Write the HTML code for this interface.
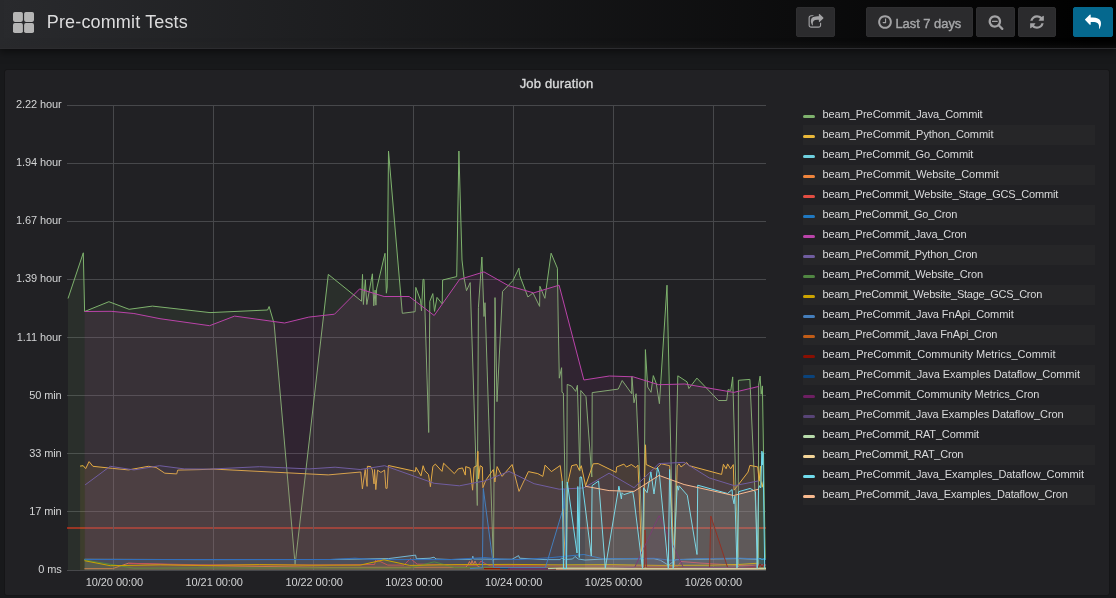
<!DOCTYPE html>
<html lang="en"><head><meta charset="utf-8"><title>Pre-commit Tests - Grafana</title>
<style>
*{box-sizing:border-box;margin:0;padding:0}
html,body{width:1116px;height:598px;overflow:hidden;background:#18191b;font-family:"Liberation Sans",Arial,sans-serif;color:#d8d9da}
.layer{position:absolute;left:0;top:0;width:1116px;height:598px;will-change:transform}
.navbar{position:absolute;left:0;top:0;width:1116px;height:49px;background:linear-gradient(90deg,#292a2d,#000);border-bottom:1px solid #2c2c2f;box-shadow:inset 0 -6px 8px -6px rgba(40,40,42,.55),0 2px 8px 1px rgba(0,0,0,.5)}
.navicon{position:absolute;left:13px;top:12px;width:21px;height:21px}
.navtitle{position:absolute;left:46.8px;top:10px;font-size:18px;line-height:24px;color:#dcdcdd;white-space:nowrap;letter-spacing:.15px}
.btn{position:absolute;top:7px;height:30px;background:#2b2b2d;border-radius:2px;color:#b9b9ba;font-size:13px;line-height:30px;white-space:nowrap;border:1px solid #2f2f31}
.btn svg{position:absolute}
.btn.primary{background:#05688e;border-color:#05688e}
.panel{position:absolute;left:4px;top:69px;width:1106px;height:527px;background:#212124;border:1px solid #151517;border-radius:3px}
.ptitle{position:absolute;left:0;top:76px;width:1113px;text-align:center;font-size:13px;-webkit-text-stroke:.35px #d8d9da;letter-spacing:.17px;line-height:16px;color:#d8d9da}
.chart{position:absolute;left:0;top:0}
.yl{position:absolute;left:0;width:61.6px;letter-spacing:-.1px;text-align:right;font-size:11px;line-height:12px;color:#d3d4d5;white-space:nowrap}
.xl{position:absolute;top:576px;letter-spacing:-.07px;width:80px;margin-left:-40px;text-align:center;font-size:11px;line-height:12px;color:#d3d4d5;white-space:nowrap}
.lg{position:absolute;left:803px;width:292px;height:20px;font-size:11px;letter-spacing:-.08px;line-height:20px;color:#d8d9da;white-space:nowrap}
.lg.alt{background:#262628}
.lg i{position:absolute;left:0.3px;top:10px;width:12px;height:3px;border-radius:1.5px}
.lg span{position:absolute;left:19.5px;top:-1.4px}
</style></head><body>

<div class="layer">
<div class="navbar">
<svg class="navicon" viewBox="0 0 21 21"><g fill="#b5b5b5"><rect x="0" y="0" width="9.9" height="9.9" rx="1.8"/><rect x="11.1" y="0" width="9.9" height="9.9" rx="1.8"/><rect x="0" y="11.1" width="9.9" height="9.9" rx="1.8"/><rect x="11.1" y="11.1" width="9.9" height="9.9" rx="1.8"/></g></svg>
<div class="navtitle">Pre-commit Tests</div>
<div class="btn" style="left:796px;width:39px"><svg style="left:10.5px;top:5.5px" width="16.00" height="16" viewBox="0 0 1792 1792"><path fill="#a3a3a5" d="M1472 989v259q0 119-84.500 203.500t-203.500 84.500h-832q-119 0-203.500-84.500t-84.500-203.500v-832q0-119 84.500-203.500t203.500-84.500h255q13 0 22.500 9.500t9.500 22.500q0 27-26 32-77 26-133 60-10 4-16 4h-112q-66 0-113 47t-47 113v832q0 66 47 113t113 47h832q66 0 113-47t47-113v-214q0-19 18-29 28-13 54-37 16-16 35-8 21 9 21 29zm237-496l-384 384q-18 19-45 19-12 0-25-5-39-17-39-59v-192h-160q-323 0-438 131-119 137-74 473 3 23-20 34-8 2-12 2-16 0-26-13-10-14-21-31t-39.500-68.500-49.500-99.500-38.500-114-17.500-122q0-49 3.500-91t14-90 28-88 47-81.500 68.500-74 94.500-61.500 124.500-48.500 159.500-30.500 196.500-11h160v-192q0-42 39-59 13-5 25-5 26 0 45 19l384 384q19 19 19 45t-19 45z"/></svg></div>
<div class="btn" style="left:866px;width:107px"><svg style="left:10.1px;top:6px" width="16.00" height="16" viewBox="0 0 1792 1792"><path fill="#a3a3a5" d="M1024 544v448q0 14-9 23t-23 9h-320q-14 0-23-9t-9-23v-64q0-14 9-23t23-9h224v-352q0-14 9-23t23-9h64q14 0 23 9t9 23zm416 352q0-148-73-273t-198-198-273-73-273 73-198 198-73 273 73 273 198 198 273 73 273-73 198-198 73-273zm224 0q0 209-103 385.500t-279.500 279.500-385.500 103-385.500-103-279.500-279.500-103-385.500 103-385.500 279.500-279.500 385.500-103 385.500 103 279.500 279.500 103 385.500z"/></svg><span style="position:absolute;left:28.4px;top:1px;font-size:12.9px;-webkit-text-stroke:.4px #a6a7a9;color:#a6a7a9">Last 7 days</span></div>
<div class="btn" style="left:976px;width:39px"><svg style="left:10.6px;top:6px" width="16.00" height="16" viewBox="0 0 1792 1792"><path fill="#a3a3a5" d="M1088 800v64q0 13-9.500 22.500t-22.500 9.500h-576q-13 0-22.500-9.500t-9.500-22.500v-64q0-13 9.500-22.500t22.500-9.500h576q13 0 22.500 9.500t9.500 22.500zm128 32q0-185-131.500-316.500t-316.500-131.500-316.500 131.500-131.500 316.500 131.500 316.500 316.500 131.500 316.500-131.500 131.500-316.500zm512 832q0 53-37.500 90.500t-90.500 37.500q-54 0-90-38l-343-342q-179 124-399 124-143 0-273.500-55.500t-225-150-150-225-55.500-273.500 55.500-273.500 150-225 225-150 273.500-55.500 273.500 55.500 225 150 150 225 55.500 273.500q0 220-124 399l343 343q37 37 37 90z"/></svg></div>
<div class="btn" style="left:1018px;width:38px"><svg style="left:9.8px;top:5.7px" width="16.00" height="16" viewBox="0 0 1792 1792"><path fill="#a3a3a5" d="M1639 1056q0 5-1 7-64 268-268 434.500t-478 166.500q-146 0-282.500-55t-243.500-157l-129 129q-19 19-45 19t-45-19-19-45v-448q0-26 19-45t45-19h448q26 0 45 19t19 45-19 45l-137 137q71 66 161 102t187 36q134 0 250-65t186-179q11-17 53-117 8-23 30-23h192q13 0 22.500 9.500t9.500 22.500zm25-800v448q0 26-19 45t-45 19h-448q-26 0-45-19t-19-45 19-45l138-138q-148-137-349-137-134 0-250 65t-186 179q-11 17-53 117-8 23-30 23h-199q-13 0-22.500-9.500t-9.500-22.500v-7q65-268 270-434.500t480-166.500q146 0 284 55.500t245 156.500l130-129q19-19 45-19t45 19 19 45z"/></svg></div>
<div class="btn primary" style="left:1073px;width:40px"><svg style="left:11.2px;top:5.9px" width="16.00" height="16" viewBox="0 0 1792 1792"><path fill="#ffffff" d="M1792 1120q0 166-127 451-3 7-10.500 24t-13.500 30-13 22q-12 17-28 17-15 0-23.500-10t-8.500-25q0-9 2.500-26.500t2.500-23.500q5-68 5-123 0-101-17.500-181t-48.500-138.500-80-101-105.500-69.500-133-42.500-154-21.500-175.500-6h-224v256q0 26-19 45t-45 19-45-19l-512-512q-19-19-19-45t19-45l512-512q19-19 45-19t45 19 19 45v256h224q713 0 875 403 53 134 53 333z"/></svg></div>
</div>
<div class="panel"></div>
<div class="ptitle">Job duration</div>
<svg class="chart" width="1116" height="598" viewBox="0 0 1116 598">
<path d="M67 528 H766" stroke="rgba(237,46,24,0.6)" stroke-width="2" fill="none"/>
<path d="M67 105.5 H766 M67 163.5 H766 M67 221.5 H766 M67 279.5 H766 M67 337.5 H766 M67 395.5 H766 M67 453.5 H766 M67 511.5 H766 M67 570.5 H766 M113.5 105 V571 M213.5 105 V571 M313.5 105 V571 M413.5 105 V571 M513.5 105 V571 M613.5 105 V571 M713.5 105 V571" stroke="#47484b" stroke-width="1" fill="none" shape-rendering="crispEdges"/>
<path d="M68 298.5 L83.3 252.8 L84.6 311.5 L108.9 301.7 L129.1 309.3 L152.4 306.1 L210 312.6 L267.6 310 L269.1 306.5 L274.1 323.5 L295.1 564.5 L328.3 274.4 L361.5 301.2 L362.5 274.4 L363.4 304.5 L365.3 279.8 L366.8 304.5 L372.4 273.8 L373.8 305.8 L375.1 290.1 L375.9 305.2 L376.6 289 L385 253.3 L386.4 293.2 L387.2 287 L388.5 151 L402.3 313.3 L415.1 311.7 L415.8 287.4 L420.5 300.2 L421.5 310.8 L423 279.4 L424 279.4 L428.7 432.5 L429.8 301.4 L432.8 293.6 L434.5 311.4 L437 297.4 L442.2 303.9 L442.6 280 L456.7 276.6 L458.9 151 L462 260 L464 277.6 L466.5 290.7 L470.2 282.6 L477.3 505.5 L478.4 307.7 L481.9 257 L484 316.5 L485 302.7 L493.5 566 L495 297.6 L497 401.7 L502.5 291.4 L512.9 280.7 L518.9 268.2 L519.8 275.7 L527.9 297 L533 292.9 L539.6 306.4 L539.9 286.3 L544.9 298.3 L551.1 253.2 L557.4 268.2 L558.2 320 L559.3 378.2 L561.6 367.7 L562 392.3 L563.4 393.2 L566.5 568 L567.2 384.4 L571.6 386.1 L575.7 391.4 L577.4 385.3 L579.8 471.1 L580.8 390.5 L586 396.7 L591.8 477 L592.2 392.6 L618.2 389.1 L622.2 380.5 L631.7 393.7 L631.9 376.5 L634 402.8 L636.1 393.7 L643.6 568 L645.4 349.6 L647.7 387 L651 392.3 L653.3 375.6 L656.3 383.5 L659.4 403.7 L667 285.2 L673.5 568 L677.8 375.8 L687.1 381.9 L688.9 388.5 L696.9 378.1 L718.4 400.5 L726.7 400.5 L728 389.7 L730.8 390.4 L732.7 376.9 L738.2 568 L738.4 380.3 L749.9 379.4 L758.4 568 L758.6 385.2 L760.1 376.1 L761.2 394.2 L762.4 385.9 L765.3 560 L765.3 570 L68 570 Z" fill="#7EB26D" fill-opacity="0.1" stroke="none"/>
<path d="M68 298.5 L83.3 252.8 L84.6 311.5 L108.9 301.7 L129.1 309.3 L152.4 306.1 L210 312.6 L267.6 310 L269.1 306.5 L274.1 323.5 L295.1 564.5 L328.3 274.4 L361.5 301.2 L362.5 274.4 L363.4 304.5 L365.3 279.8 L366.8 304.5 L372.4 273.8 L373.8 305.8 L375.1 290.1 L375.9 305.2 L376.6 289 L385 253.3 L386.4 293.2 L387.2 287 L388.5 151 L402.3 313.3 L415.1 311.7 L415.8 287.4 L420.5 300.2 L421.5 310.8 L423 279.4 L424 279.4 L428.7 432.5 L429.8 301.4 L432.8 293.6 L434.5 311.4 L437 297.4 L442.2 303.9 L442.6 280 L456.7 276.6 L458.9 151 L462 260 L464 277.6 L466.5 290.7 L470.2 282.6 L477.3 505.5 L478.4 307.7 L481.9 257 L484 316.5 L485 302.7 L493.5 566 L495 297.6 L497 401.7 L502.5 291.4 L512.9 280.7 L518.9 268.2 L519.8 275.7 L527.9 297 L533 292.9 L539.6 306.4 L539.9 286.3 L544.9 298.3 L551.1 253.2 L557.4 268.2 L558.2 320 L559.3 378.2 L561.6 367.7 L562 392.3 L563.4 393.2 L566.5 568 L567.2 384.4 L571.6 386.1 L575.7 391.4 L577.4 385.3 L579.8 471.1 L580.8 390.5 L586 396.7 L591.8 477 L592.2 392.6 L618.2 389.1 L622.2 380.5 L631.7 393.7 L631.9 376.5 L634 402.8 L636.1 393.7 L643.6 568 L645.4 349.6 L647.7 387 L651 392.3 L653.3 375.6 L656.3 383.5 L659.4 403.7 L667 285.2 L673.5 568 L677.8 375.8 L687.1 381.9 L688.9 388.5 L696.9 378.1 L718.4 400.5 L726.7 400.5 L728 389.7 L730.8 390.4 L732.7 376.9 L738.2 568 L738.4 380.3 L749.9 379.4 L758.4 568 L758.6 385.2 L760.1 376.1 L761.2 394.2 L762.4 385.9 L765.3 560" fill="none" stroke="#7EB26D" stroke-width="1" stroke-linejoin="round"/>
<path d="M80.1 466.1 L83.2 465.7 L85.7 468.6 L89.1 461.6 L92.9 466.3 L112.7 468.4 L128.4 469.9 L148.5 466.3 L156 467.4 L164.8 473.2 L176.7 473.9 L177.7 470.1 L200 469.6 L213.8 469.1 L328.2 474.9 L360.8 472 L362.4 488.9 L365.2 469.5 L367.1 486.4 L367.4 466.3 L370.8 466.6 L372.4 470.1 L374 483.9 L374.6 469.5 L375.8 489.6 L377.5 470.1 L380.9 472.4 L384.6 470.1 L385.9 488.3 L387.1 488.3 L388.4 465.5 L415.4 471.4 L416 467.4 L421 475.8 L423.1 465.7 L424.8 470.7 L428.5 474.5 L430.4 486.7 L432.9 466.3 L435.4 464.1 L442 471.4 L443.6 463.2 L454.3 473.6 L458.2 468.9 L462.5 467.9 L465.3 475.1 L465.7 466.6 L470.1 468.2 L472.6 490.2 L474.1 467 L477 465.7 L477.9 451.3 L478.6 478.9 L480.1 465.7 L482.4 467 L482.9 487.7 L485.8 480.2 L493.3 469.5 L494.9 482 L497.1 466.6 L502.1 476.4 L512.1 464.5 L519 491.4 L528.4 471.6 L537.8 473.6 L542.8 476.4 L545.1 465.1 L551.4 471.6 L560.2 465.5 L562.3 481.4 L565.4 568 L567.3 485.2 L571.7 465.7 L576.7 464.5 L579.2 470.1 L581.3 465.7 L585.6 485.8 L593.2 463.8 L598.2 463.6 L616.1 472.4 L616.6 467 L623.9 464.1 L626.4 467 L631.4 464.5 L635.8 467.6 L638 465.1 L642.2 568 L645.5 444.8 L646.2 464.5 L655.9 469.1 L661.3 463.8 L669.7 465.7 L674.2 568 L677.2 465.7 L679.1 463.8 L681 467 L686.7 462.6 L689.2 465.7 L721.6 474.4 L723.4 464.3 L726.1 468.8 L727.6 463.9 L730.6 468.8 L733.3 464.6 L734.1 490.2 L748 472.1 L749.9 465.4 L757.7 466.9 L759.2 481.2 L760.4 466.1 L761 481 L762.2 487.2 L763.4 481.2 L763.4 570 L80.1 570 Z" fill="#EAB839" fill-opacity="0.1" stroke="none"/>
<path d="M80.1 466.1 L83.2 465.7 L85.7 468.6 L89.1 461.6 L92.9 466.3 L112.7 468.4 L128.4 469.9 L148.5 466.3 L156 467.4 L164.8 473.2 L176.7 473.9 L177.7 470.1 L200 469.6 L213.8 469.1 L328.2 474.9 L360.8 472 L362.4 488.9 L365.2 469.5 L367.1 486.4 L367.4 466.3 L370.8 466.6 L372.4 470.1 L374 483.9 L374.6 469.5 L375.8 489.6 L377.5 470.1 L380.9 472.4 L384.6 470.1 L385.9 488.3 L387.1 488.3 L388.4 465.5 L415.4 471.4 L416 467.4 L421 475.8 L423.1 465.7 L424.8 470.7 L428.5 474.5 L430.4 486.7 L432.9 466.3 L435.4 464.1 L442 471.4 L443.6 463.2 L454.3 473.6 L458.2 468.9 L462.5 467.9 L465.3 475.1 L465.7 466.6 L470.1 468.2 L472.6 490.2 L474.1 467 L477 465.7 L477.9 451.3 L478.6 478.9 L480.1 465.7 L482.4 467 L482.9 487.7 L485.8 480.2 L493.3 469.5 L494.9 482 L497.1 466.6 L502.1 476.4 L512.1 464.5 L519 491.4 L528.4 471.6 L537.8 473.6 L542.8 476.4 L545.1 465.1 L551.4 471.6 L560.2 465.5 L562.3 481.4 L565.4 568 L567.3 485.2 L571.7 465.7 L576.7 464.5 L579.2 470.1 L581.3 465.7 L585.6 485.8 L593.2 463.8 L598.2 463.6 L616.1 472.4 L616.6 467 L623.9 464.1 L626.4 467 L631.4 464.5 L635.8 467.6 L638 465.1 L642.2 568 L645.5 444.8 L646.2 464.5 L655.9 469.1 L661.3 463.8 L669.7 465.7 L674.2 568 L677.2 465.7 L679.1 463.8 L681 467 L686.7 462.6 L689.2 465.7 L721.6 474.4 L723.4 464.3 L726.1 468.8 L727.6 463.9 L730.6 468.8 L733.3 464.6 L734.1 490.2 L748 472.1 L749.9 465.4 L757.7 466.9 L759.2 481.2 L760.4 466.1 L761 481 L762.2 487.2 L763.4 481.2" fill="none" stroke="#EAB839" stroke-width="1" stroke-linejoin="round"/>
<path d="M84.5 559.3 L200 559.6 L330 559.5 L388.4 558.6 L415.6 555.1 L416.4 558.8 L430 558.2 L434 557.2 L436 559 L450 559.5 L470 559.3 L472.2 559 L472.8 556.2 L473.6 559 L495 559.2 L512 559.3 L518.6 555.6 L519.6 558.2 L545 559.6 L560 559.6 L561.9 557.9 L563.8 559.6 L572.6 559 L575 556.4 L578.2 559 L585 560 L604 559 L654 558.7 L660.3 560.2 L668.5 565.2 L676 559.5 L700 559.2 L740 558.6 L757 559.3 L760 558.3 L762 559.6 L765 558.5 L765 570 L84.5 570 Z" fill="#6ED0E0" fill-opacity="0.1" stroke="none"/>
<path d="M84.5 559.3 L200 559.6 L330 559.5 L388.4 558.6 L415.6 555.1 L416.4 558.8 L430 558.2 L434 557.2 L436 559 L450 559.5 L470 559.3 L472.2 559 L472.8 556.2 L473.6 559 L495 559.2 L512 559.3 L518.6 555.6 L519.6 558.2 L545 559.6 L560 559.6 L561.9 557.9 L563.8 559.6 L572.6 559 L575 556.4 L578.2 559 L585 560 L604 559 L654 558.7 L660.3 560.2 L668.5 565.2 L676 559.5 L700 559.2 L740 558.6 L757 559.3 L760 558.3 L762 559.6 L765 558.5" fill="none" stroke="#6ED0E0" stroke-width="1" stroke-linejoin="round"/>
<path d="M84.5 568.6 L112.7 568.6 L128.4 563.2 L200 565.6 L330 567.4 L466 567.2 L467.6 565 L469.5 561.5 L470.8 564.5 L472 560.5 L473.5 564.5 L475 561 L477 565.5 L480 567.4 L560 567.6 L640 567.6 L766 567.4 L766 570 L84.5 570 Z" fill="#EF843C" fill-opacity="0.1" stroke="none"/>
<path d="M84.5 568.6 L112.7 568.6 L128.4 563.2 L200 565.6 L330 567.4 L466 567.2 L467.6 565 L469.5 561.5 L470.8 564.5 L472 560.5 L473.5 564.5 L475 561 L477 565.5 L480 567.4 L560 567.6 L640 567.6 L766 567.4" fill="none" stroke="#EF843C" stroke-width="1" stroke-linejoin="round"/>
<path d="M128.4 563.4 L200 564.8 L320 564.9 L374.6 564.5 L375.8 559.5 L387.8 565.1 L404 565.1 L410.3 558.6 L417.2 564.1 L470 565 L478 565 L481 561 L486 564 L490 565.8 L560 566 L678 566 L681 561.5 L700 563 L740 565.5 L766 565 L766 570 L128.4 570 Z" fill="#E24D42" fill-opacity="0.1" stroke="none"/>
<path d="M128.4 563.4 L200 564.8 L320 564.9 L374.6 564.5 L375.8 559.5 L387.8 565.1 L404 565.1 L410.3 558.6 L417.2 564.1 L470 565 L478 565 L481 561 L486 564 L490 565.8 L560 566 L678 566 L681 561.5 L700 563 L740 565.5 L766 565" fill="none" stroke="#E24D42" stroke-width="1" stroke-linejoin="round"/>
<path d="M84.5 559.5 L200 559.5 L330 559.5 L355 558.2 L372 559.5 L450 559.6 L470 558.4 L485 557.6 L500 559 L520 559.6 L550 557.7 L583.9 554.5 L602.7 558.7 L654 558.3 L670 560.2 L700 558.6 L740 558.2 L766 559.2 L766 570 L84.5 570 Z" fill="#1F78C1" fill-opacity="0.1" stroke="none"/>
<path d="M84.5 559.5 L200 559.5 L330 559.5 L355 558.2 L372 559.5 L450 559.6 L470 558.4 L485 557.6 L500 559 L520 559.6 L550 557.7 L583.9 554.5 L602.7 558.7 L654 558.3 L670 560.2 L700 558.6 L740 558.2 L766 559.2" fill="none" stroke="#1F78C1" stroke-width="1" stroke-linejoin="round"/>
<path d="M84.6 311.5 L111.1 311.3 L133.9 313.5 L160 318.7 L209.6 325.7 L234.6 316.1 L284.6 323 L308.8 317.1 L334.5 314.2 L359.6 288.9 L384.1 296.5 L409.2 296.5 L434.2 315.5 L459.6 279.4 L484 271.9 L508.5 285.7 L533.6 292.9 L559.1 285.2 L583.9 380 L609.4 376 L633.1 376.8 L658.6 384.7 L684.8 384 L733.8 392.4 L758.9 386.4 L758.9 570 L84.6 570 Z" fill="#BA43A9" fill-opacity="0.1" stroke="none"/>
<path d="M84.6 311.5 L111.1 311.3 L133.9 313.5 L160 318.7 L209.6 325.7 L234.6 316.1 L284.6 323 L308.8 317.1 L334.5 314.2 L359.6 288.9 L384.1 296.5 L409.2 296.5 L434.2 315.5 L459.6 279.4 L484 271.9 L508.5 285.7 L533.6 292.9 L559.1 285.2 L583.9 380 L609.4 376 L633.1 376.8 L658.6 384.7 L684.8 384 L733.8 392.4 L758.9 386.4" fill="none" stroke="#BA43A9" stroke-width="1" stroke-linejoin="round"/>
<path d="M85.1 484.9 L110.2 466.3 L134 469.9 L159.7 465.7 L184.2 468.9 L209.4 469.1 L259.6 466.7 L309.2 468.9 L335.1 467.2 L360.2 469.5 L384.6 465.7 L434.2 483.3 L459.4 485.8 L485.1 480.8 L509 471.4 L534.1 483.7 L559.2 489.2 L583.8 487.9 L609.1 473.2 L634 487.7 L659 463.6 L684.1 462.3 L709.2 477.9 L734.4 485.7 L758.5 480.9 L758.5 570 L85.1 570 Z" fill="#705DA0" fill-opacity="0.1" stroke="none"/>
<path d="M85.1 484.9 L110.2 466.3 L134 469.9 L159.7 465.7 L184.2 468.9 L209.4 469.1 L259.6 466.7 L309.2 468.9 L335.1 467.2 L360.2 469.5 L384.6 465.7 L434.2 483.3 L459.4 485.8 L485.1 480.8 L509 471.4 L534.1 483.7 L559.2 489.2 L583.8 487.9 L609.1 473.2 L634 487.7 L659 463.6 L684.1 462.3 L709.2 477.9 L734.4 485.7 L758.5 480.9" fill="none" stroke="#705DA0" stroke-width="1" stroke-linejoin="round"/>
<path d="M84.5 560 L134 568.2 L200 567.9 L410 568 L434.2 561.8 L455 567.6 L560 568 L766 568 L766 570 L84.5 570 Z" fill="#508642" fill-opacity="0.1" stroke="none"/>
<path d="M84.5 560 L134 568.2 L200 567.9 L410 568 L434.2 561.8 L455 567.6 L560 568 L766 568" fill="none" stroke="#508642" stroke-width="1" stroke-linejoin="round"/>
<path d="M84.5 560.7 L110.2 565.7 L160.4 564.9 L210 565.4 L259.6 564.6 L310 565.2 L360.2 565.1 L384 559.8 L409.7 565.4 L460 564.6 L510 564.4 L560 564.8 L610 564.6 L660 565.4 L710 565.2 L740 564.4 L758 563.2 L758 570 L84.5 570 Z" fill="#CCA300" fill-opacity="0.1" stroke="none"/>
<path d="M84.5 560.7 L110.2 565.7 L160.4 564.9 L210 565.4 L259.6 564.6 L310 565.2 L360.2 565.1 L384 559.8 L409.7 565.4 L460 564.6 L510 564.4 L560 564.8 L610 564.6 L660 565.4 L710 565.2 L740 564.4 L758 563.2" fill="none" stroke="#CCA300" stroke-width="1" stroke-linejoin="round"/>
<path d="M470 568.6 L482.4 567.7 L483.3 488.5 L493.7 567.7 L545.4 567.7 L563.6 507 L564.4 489 L566 567.7 L566 570 L470 570 Z" fill="#447EBC" fill-opacity="0.1" stroke="none"/>
<path d="M470 568.6 L482.4 567.7 L483.3 488.5 L493.7 567.7 L545.4 567.7 L563.6 507 L564.4 489 L566 567.7" fill="none" stroke="#447EBC" stroke-width="1" stroke-linejoin="round"/>
<path d="M484 568.8 L500 568.8 L600 568 L626 568.8 L626 570 L484 570 Z" fill="#C15C17" fill-opacity="0.1" stroke="none"/>
<path d="M484 568.8 L500 568.8 L600 568 L626 568.8" fill="none" stroke="#C15C17" stroke-width="1" stroke-linejoin="round"/>
<path d="M484 568.6 L520 568.8 L600 568.8 L644.6 567.7 L645 530 L646.5 567.7 L709.6 567.7 L710.8 516 L727.7 567.7 L758 567.8 L760 564 L762 567 L764 564 L764 570 L484 570 Z" fill="#890F02" fill-opacity="0.1" stroke="none"/>
<path d="M484 568.6 L520 568.8 L600 568.8 L644.6 567.7 L645 530 L646.5 567.7 L709.6 567.7 L710.8 516 L727.7 567.7 L758 567.8 L760 564 L762 567 L764 564" fill="none" stroke="#890F02" stroke-width="1" stroke-linejoin="round"/>
<path d="M500 568.6 L510 568.6 L510 570 L500 570 Z" fill="#0A437C" fill-opacity="0.1" stroke="none"/>
<path d="M500 568.6 L510 568.6" fill="none" stroke="#0A437C" stroke-width="1" stroke-linejoin="round"/>
<path d="M508 568.6 L600 568.6 L634.6 567.5 L659.1 515.7 L683.2 567.1 L740 567.8 L757 566 L757 570 L508 570 Z" fill="#6D1F62" fill-opacity="0.1" stroke="none"/>
<path d="M508 568.6 L600 568.6 L634.6 567.5 L659.1 515.7 L683.2 567.1 L740 567.8 L757 566" fill="none" stroke="#6D1F62" stroke-width="1" stroke-linejoin="round"/>
<path d="M510 568.9 L550 568.9 L550 570 L510 570 Z" fill="#584477" fill-opacity="0.1" stroke="none"/>
<path d="M510 568.9 L550 568.9" fill="none" stroke="#584477" stroke-width="1" stroke-linejoin="round"/>
<path d="M548 568.6 L560 568.2 L766 568.4 L766 570 L548 570 Z" fill="#B7DBAB" fill-opacity="0.1" stroke="none"/>
<path d="M548 568.6 L560 568.2 L766 568.4" fill="none" stroke="#B7DBAB" stroke-width="1" stroke-linejoin="round"/>
<path d="M556 568.9 L766 568.9 L766 570 L556 570 Z" fill="#F4D598" fill-opacity="0.1" stroke="none"/>
<path d="M556 568.9 L766 568.9" fill="none" stroke="#F4D598" stroke-width="1" stroke-linejoin="round"/>
<path d="M562.3 481 L563.5 568.5 L566.5 568.5 L567.3 482 L577 553 L577.8 486.5 L579.3 557.5 L580 477 L581.5 477 L591.3 556 L592.1 485.5 L598.6 481 L605.3 568.3 L618.9 486.2 L621.4 499 L622 492.7 L623.9 494.6 L632.7 491.7 L634 499 L642.5 568.5 L643.5 487.7 L647.1 492.7 L650.9 472 L654 494 L657.5 467.4 L659.3 473.2 L668.3 568.5 L669.6 469.5 L673.2 568.5 L676.5 500 L677.2 485.8 L678.5 490.2 L679.1 485.8 L687.3 495.2 L697 554.5 L697.7 485.2 L727.6 493.5 L732.1 489.5 L732.6 497 L734 503.8 L734.9 496.2 L737 568 L738.6 491.7 L750.2 488.4 L755.5 491.7 L757.2 568.5 L758.5 488.7 L759.5 485.7 L760.7 488 L761.9 451.1 L762.4 465 L763 452.6 L764.7 568.5 L764.7 570 L562.3 570 Z" fill="#70DBED" fill-opacity="0.1" stroke="none"/>
<path d="M562.3 481 L563.5 568.5 L566.5 568.5 L567.3 482 L577 553 L577.8 486.5 L579.3 557.5 L580 477 L581.5 477 L591.3 556 L592.1 485.5 L598.6 481 L605.3 568.3 L618.9 486.2 L621.4 499 L622 492.7 L623.9 494.6 L632.7 491.7 L634 499 L642.5 568.5 L643.5 487.7 L647.1 492.7 L650.9 472 L654 494 L657.5 467.4 L659.3 473.2 L668.3 568.5 L669.6 469.5 L673.2 568.5 L676.5 500 L677.2 485.8 L678.5 490.2 L679.1 485.8 L687.3 495.2 L697 554.5 L697.7 485.2 L727.6 493.5 L732.1 489.5 L732.6 497 L734 503.8 L734.9 496.2 L737 568 L738.6 491.7 L750.2 488.4 L755.5 491.7 L757.2 568.5 L758.5 488.7 L759.5 485.7 L760.7 488 L761.9 451.1 L762.4 465 L763 452.6 L764.7 568.5" fill="none" stroke="#70DBED" stroke-width="1" stroke-linejoin="round"/>
<path d="M585 486.2 L609.1 490.6 L634 491.4 L659 475.4 L684.1 484.5 L733.6 495.5 L758.5 489.2 L758.5 570 L585 570 Z" fill="#F9BA8F" fill-opacity="0.1" stroke="none"/>
<path d="M585 486.2 L609.1 490.6 L634 491.4 L659 475.4 L684.1 484.5 L733.6 495.5 L758.5 489.2" fill="none" stroke="#F9BA8F" stroke-width="1" stroke-linejoin="round"/>
</svg>
<div class="yl" style="top:98px">2.22 hour</div>
<div class="yl" style="top:156px">1.94 hour</div>
<div class="yl" style="top:214px">1.67 hour</div>
<div class="yl" style="top:272px">1.39 hour</div>
<div class="yl" style="top:331px">1.11 hour</div>
<div class="yl" style="top:389px">50 min</div>
<div class="yl" style="top:447px">33 min</div>
<div class="yl" style="top:505px">17 min</div>
<div class="yl" style="top:563px">0 ms</div>
<div class="xl" style="left:114.4px">10/20 00:00</div>
<div class="xl" style="left:214.2px">10/21 00:00</div>
<div class="xl" style="left:314.1px">10/22 00:00</div>
<div class="xl" style="left:413.9px">10/23 00:00</div>
<div class="xl" style="left:513.7px">10/24 00:00</div>
<div class="xl" style="left:613.5px">10/25 00:00</div>
<div class="xl" style="left:713.4px">10/26 00:00</div>
<div class="lg" style="top:105px"><i style="background:#7EB26D"></i><span style="letter-spacing:-0.073px">beam_PreCommit_Java_Commit</span></div>
<div class="lg alt" style="top:125px"><i style="background:#EAB839"></i><span style="letter-spacing:-0.076px">beam_PreCommit_Python_Commit</span></div>
<div class="lg" style="top:145px"><i style="background:#6ED0E0"></i><span style="letter-spacing:-0.114px">beam_PreCommit_Go_Commit</span></div>
<div class="lg alt" style="top:165px"><i style="background:#EF843C"></i><span style="letter-spacing:-0.073px">beam_PreCommit_Website_Commit</span></div>
<div class="lg" style="top:185px"><i style="background:#E24D42"></i><span style="letter-spacing:-0.193px">beam_PreCommit_Website_Stage_GCS_Commit</span></div>
<div class="lg alt" style="top:205px"><i style="background:#1F78C1"></i><span style="letter-spacing:-0.218px">beam_PreCommit_Go_Cron</span></div>
<div class="lg" style="top:225px"><i style="background:#BA43A9"></i><span style="letter-spacing:-0.165px">beam_PreCommit_Java_Cron</span></div>
<div class="lg alt" style="top:245px"><i style="background:#705DA0"></i><span style="letter-spacing:-0.16px">beam_PreCommit_Python_Cron</span></div>
<div class="lg" style="top:265px"><i style="background:#508642"></i><span style="letter-spacing:-0.141px">beam_PreCommit_Website_Cron</span></div>
<div class="lg alt" style="top:285px"><i style="background:#CCA300"></i><span style="letter-spacing:-0.259px">beam_PreCommit_Website_Stage_GCS_Cron</span></div>
<div class="lg" style="top:305px"><i style="background:#447EBC"></i><span style="letter-spacing:-0.084px">beam_PreCommit_Java FnApi_Commit</span></div>
<div class="lg alt" style="top:325px"><i style="background:#C15C17"></i><span style="letter-spacing:-0.165px">beam_PreCommit_Java FnApi_Cron</span></div>
<div class="lg" style="top:345px"><i style="background:#890F02"></i><span style="letter-spacing:0.003px">beam_PreCommit_Community Metrics_Commit</span></div>
<div class="lg alt" style="top:365px"><i style="background:#0A437C"></i><span style="letter-spacing:-0.041px">beam_PreCommit_Java Examples Dataflow_Commit</span></div>
<div class="lg" style="top:385px"><i style="background:#6D1F62"></i><span style="letter-spacing:-0.053px">beam_PreCommit_Community Metrics_Cron</span></div>
<div class="lg alt" style="top:405px"><i style="background:#584477"></i><span style="letter-spacing:-0.099px">beam_PreCommit_Java Examples Dataflow_Cron</span></div>
<div class="lg" style="top:425px"><i style="background:#B7DBAB"></i><span style="letter-spacing:-0.142px">beam_PreCommit_RAT_Commit</span></div>
<div class="lg alt" style="top:445px"><i style="background:#F4D598"></i><span style="letter-spacing:-0.226px">beam_PreCommit_RAT_Cron</span></div>
<div class="lg" style="top:465px"><i style="background:#70DBED"></i><span style="letter-spacing:-0.089px">beam_PreCommit_Java_Examples_Dataflow_Commit</span></div>
<div class="lg alt" style="top:485px"><i style="background:#F9BA8F"></i><span style="letter-spacing:-0.142px">beam_PreCommit_Java_Examples_Dataflow_Cron</span></div>
</div>
</body></html>
